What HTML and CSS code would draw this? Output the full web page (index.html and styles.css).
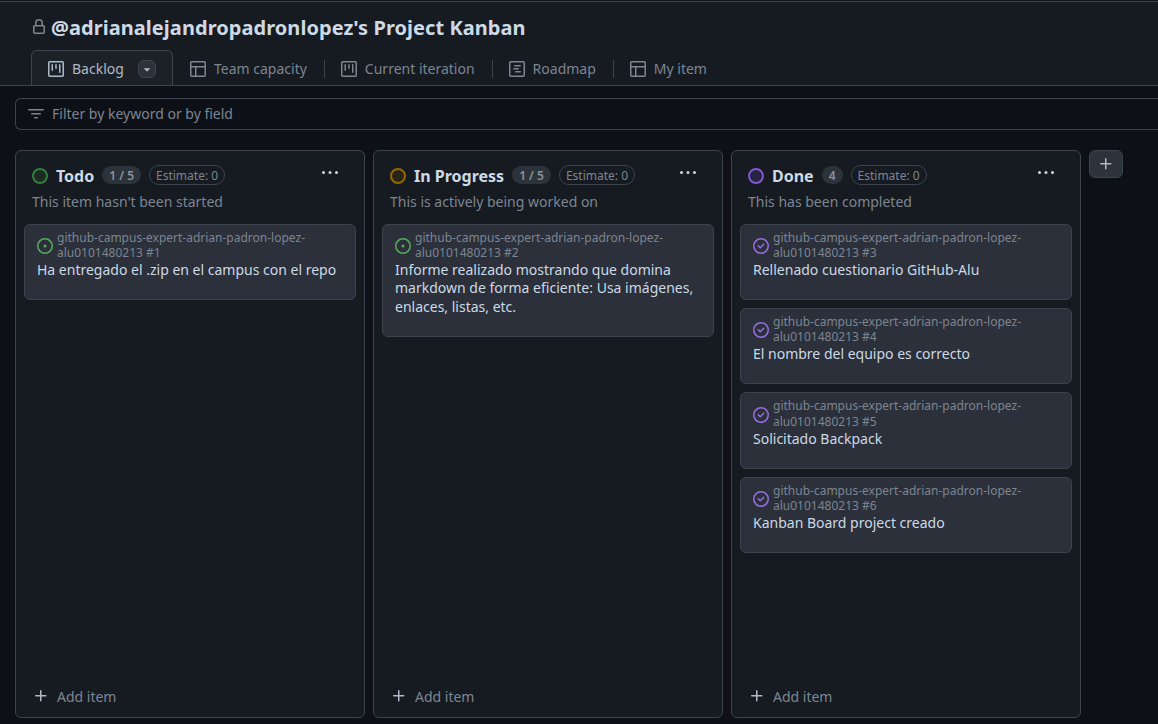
FILE: index.html
```html
<!DOCTYPE html>
<html lang="en">
<head>
    <meta charset="UTF-8">
    <meta name="viewport" content="width=device-width, initial-scale=1.0">
    <title>Project Kanban</title>
    <link rel="stylesheet" href="styles.css">
</head>
<body>
    <svg class="icon-defs" aria-hidden="true">
        <symbol id="i-lock" viewBox="0 0 16 16"><path d="M4 4a4 4 0 0 1 8 0v2h.25c.966 0 1.75.784 1.75 1.75v5.5A1.75 1.75 0 0 1 12.25 15h-8.5A1.75 1.75 0 0 1 2 13.25v-5.5C2 6.784 2.784 6 3.75 6H4Zm8.25 3.5h-8.5a.25.25 0 0 0-.25.25v5.5c0 .138.112.25.25.25h8.5a.25.25 0 0 0 .25-.25v-5.5a.25.25 0 0 0-.25-.25ZM10.5 6V4a2.5 2.5 0 1 0-5 0v2Z"/></symbol>
        <symbol id="i-board" viewBox="0 0 16 16"><path d="M0 1.75C0 .784.784 0 1.75 0h12.5C15.216 0 16 .784 16 1.75v12.5A1.75 1.75 0 0 1 14.25 16H1.75A1.75 1.75 0 0 1 0 14.25ZM1.5 1.75v12.5c0 .138.112.25.25.25h12.5a.25.25 0 0 0 .25-.25V1.75a.25.25 0 0 0-.25-.25H1.75a.25.25 0 0 0-.25.25ZM11.75 3a.75.75 0 0 1 .75.75v7.5a.75.75 0 0 1-1.5 0v-7.5a.75.75 0 0 1 .75-.75Zm-8.25.75a.75.75 0 0 1 1.5 0v5.5a.75.75 0 0 1-1.5 0ZM8 3a.75.75 0 0 1 .75.75v3.5a.75.75 0 0 1-1.5 0v-3.5A.75.75 0 0 1 8 3Z"/></symbol>
        <symbol id="i-table" viewBox="0 0 16 16"><path d="M0 1.75C0 .784.784 0 1.75 0h12.5C15.216 0 16 .784 16 1.75v12.5A1.75 1.75 0 0 1 14.25 16H1.75A1.75 1.75 0 0 1 0 14.25ZM6.5 6.5v8h7.75a.25.25 0 0 0 .25-.25V6.5Zm8-1.5V1.75a.25.25 0 0 0-.25-.25H1.75a.25.25 0 0 0-.25.25V5Zm-13 1.5v7.75c0 .138.112.25.25.25H5v-8Z"/></symbol>
        <symbol id="i-roadmap" viewBox="0 0 16 16"><path d="M4.75 7a.75.75 0 0 0 0 1.5h4.5a.75.75 0 0 0 0-1.5h-4.5ZM5 4.75A.75.75 0 0 1 5.75 4h5.5a.75.75 0 0 1 0 1.5h-5.5A.75.75 0 0 1 5 4.75ZM6.75 10a.75.75 0 0 0 0 1.5h4.5a.75.75 0 0 0 0-1.5h-4.5Z"/><path d="M0 1.75C0 .784.784 0 1.75 0h12.5C15.216 0 16 .784 16 1.75v12.5A1.75 1.75 0 0 1 14.25 16H1.75A1.75 1.75 0 0 1 0 14.25V1.75Zm1.75-.25a.25.25 0 0 0-.25.25v12.5c0 .138.112.25.25.25h12.5a.25.25 0 0 0 .25-.25V1.75a.25.25 0 0 0-.25-.25H1.75Z"/></symbol>
        <symbol id="i-filter" viewBox="0 0 16 16"><path d="M.75 3h14.5a.75.75 0 0 1 0 1.5H.75a.75.75 0 0 1 0-1.5ZM3 7.75A.75.75 0 0 1 3.75 7h8.5a.75.75 0 0 1 0 1.5h-8.5A.75.75 0 0 1 3 7.75Zm3 4a.75.75 0 0 1 .75-.75h2.5a.75.75 0 0 1 0 1.5h-2.5a.75.75 0 0 1-.75-.75Z"/></symbol>
        <symbol id="i-plus" viewBox="0 0 16 16"><path d="M7.75 2a.75.75 0 0 1 .75.75V7h4.25a.75.75 0 0 1 0 1.5H8.5v4.25a.75.75 0 0 1-1.5 0V8.5H2.75a.75.75 0 0 1 0-1.5H7V2.75A.75.75 0 0 1 7.75 2Z"/></symbol>
        <symbol id="i-kebab" viewBox="0 0 16 16"><path d="M8 9a1.5 1.5 0 1 0 0-3 1.5 1.5 0 0 0 0 3ZM1.5 9a1.5 1.5 0 1 0 0-3 1.5 1.5 0 0 0 0 3Zm13 0a1.5 1.5 0 1 0 0-3 1.5 1.5 0 0 0 0 3Z"/></symbol>
        <symbol id="i-open" viewBox="0 0 16 16"><path d="M8 9.5a1.5 1.5 0 1 0 0-3 1.5 1.5 0 0 0 0 3Z"/><path d="M8 0a8 8 0 1 1 0 16A8 8 0 0 1 8 0ZM1.5 8a6.5 6.5 0 1 0 13 0 6.5 6.5 0 0 0-13 0Z"/></symbol>
        <symbol id="i-closed" viewBox="0 0 16 16"><path d="M11.28 6.78a.75.75 0 0 0-1.06-1.06L7.25 8.69 5.78 7.22a.75.75 0 0 0-1.06 1.06l2 2a.75.75 0 0 0 1.06 0l3.5-3.5Z"/><path d="M16 8A8 8 0 1 1 0 8a8 8 0 0 1 16 0Zm-1.5 0a6.5 6.5 0 1 0-13 0 6.5 6.5 0 0 0 13 0Z"/></symbol>
    </svg>

    <header class="project-header">
        <h1 class="project-title">
            <svg class="icon lock-icon"><use href="#i-lock"/></svg>
            <span>@adrianalejandropadronlopez's Project Kanban</span>
        </h1>
        <nav class="tabs">
            <div class="tab tab-active">
                <svg class="icon"><use href="#i-board"/></svg>
                <span>Backlog</span>
                <span class="tab-caret"><svg viewBox="0 0 16 16"><path d="m4.427 7.427 3.396 3.396a.25.25 0 0 0 .354 0l3.396-3.396A.25.25 0 0 0 11.396 7H4.604a.25.25 0 0 0-.177.427Z"/></svg></span>
            </div>
            <div class="tab"><svg class="icon"><use href="#i-table"/></svg><span>Team capacity</span></div>
            <div class="tab tab-split"><svg class="icon"><use href="#i-board"/></svg><span>Current iteration</span></div>
            <div class="tab tab-split"><svg class="icon"><use href="#i-roadmap"/></svg><span>Roadmap</span></div>
            <div class="tab tab-split"><svg class="icon"><use href="#i-table"/></svg><span>My items</span></div>
        </nav>
    </header>

    <div class="filter-row">
        <div class="filter-bar">
            <svg class="icon"><use href="#i-filter"/></svg>
            <span>Filter by keyword or by field</span>
        </div>
    </div>

    <main class="board">
        <section class="column">
            <div class="column-head">
                <span class="status status-green"></span>
                <h2>Todo</h2>
                <span class="count">1 / 5</span>
                <span class="estimate">Estimate: 0</span>
                <svg class="icon kebab"><use href="#i-kebab"/></svg>
            </div>
            <p class="column-desc">This item hasn't been started</p>
            <div class="cards">
                <article class="card">
                    <div class="card-meta">
                        <svg class="icon state-open"><use href="#i-open"/></svg>
                        <span>github-campus-expert-adrian-padron-lopez-alu0101480213 #1</span>
                    </div>
                    <p class="card-title">Ha entregado el .zip en el campus con el repo</p>
                </article>
            </div>
            <div class="add-item"><svg class="icon"><use href="#i-plus"/></svg><span>Add item</span></div>
        </section>

        <section class="column">
            <div class="column-head">
                <span class="status status-yellow"></span>
                <h2>In Progress</h2>
                <span class="count">1 / 5</span>
                <span class="estimate">Estimate: 0</span>
                <svg class="icon kebab"><use href="#i-kebab"/></svg>
            </div>
            <p class="column-desc">This is actively being worked on</p>
            <div class="cards">
                <article class="card">
                    <div class="card-meta">
                        <svg class="icon state-open"><use href="#i-open"/></svg>
                        <span>github-campus-expert-adrian-padron-lopez-alu0101480213 #2</span>
                    </div>
                    <p class="card-title">Informe realizado mostrando que domina markdown de forma eficiente: Usa imágenes, enlaces, listas, etc.</p>
                </article>
            </div>
            <div class="add-item"><svg class="icon"><use href="#i-plus"/></svg><span>Add item</span></div>
        </section>

        <section class="column">
            <div class="column-head">
                <span class="status status-purple"></span>
                <h2>Done</h2>
                <span class="count">4</span>
                <span class="estimate">Estimate: 0</span>
                <svg class="icon kebab"><use href="#i-kebab"/></svg>
            </div>
            <p class="column-desc">This has been completed</p>
            <div class="cards">
                <article class="card">
                    <div class="card-meta">
                        <svg class="icon state-closed"><use href="#i-closed"/></svg>
                        <span>github-campus-expert-adrian-padron-lopez-alu0101480213 #3</span>
                    </div>
                    <p class="card-title">Rellenado cuestionario GitHub-Alu</p>
                </article>
                <article class="card">
                    <div class="card-meta">
                        <svg class="icon state-closed"><use href="#i-closed"/></svg>
                        <span>github-campus-expert-adrian-padron-lopez-alu0101480213 #4</span>
                    </div>
                    <p class="card-title">El nombre del equipo es correcto</p>
                </article>
                <article class="card">
                    <div class="card-meta">
                        <svg class="icon state-closed"><use href="#i-closed"/></svg>
                        <span>github-campus-expert-adrian-padron-lopez-alu0101480213 #5</span>
                    </div>
                    <p class="card-title">Solicitado Backpack</p>
                </article>
                <article class="card">
                    <div class="card-meta">
                        <svg class="icon state-closed"><use href="#i-closed"/></svg>
                        <span>github-campus-expert-adrian-padron-lopez-alu0101480213 #6</span>
                    </div>
                    <p class="card-title">Kanban Board project creado</p>
                </article>
            </div>
            <div class="add-item"><svg class="icon"><use href="#i-plus"/></svg><span>Add item</span></div>
        </section>

        <button class="add-column"><svg class="icon"><use href="#i-plus"/></svg></button>
    </main>
</body>
</html>
```

FILE: styles.css
```css
html, body {
    height: 724px;
    overflow: hidden;
}
body {
    margin: 0;
    background-color: #0d1117;
    color: #e6edf3;
    font-family: "Noto Sans", sans-serif;
    font-size: 14px;
    display: flex;
    flex-direction: column;
}
.icon-defs {
    width: 0;
    height: 0;
    position: absolute;
}
.icon {
    width: 16px;
    height: 16px;
    flex-shrink: 0;
    fill: currentColor;
}

/* header */
.project-header {
    height: 83px;
    margin-top: 1px;
    border-top: 1px solid #3d444d;
    border-bottom: 1px solid #3d444d;
    background-color: #161b22;
    padding-left: 31px;
    display: flex;
    flex-direction: column;
}
.project-title {
    margin: 0;
    height: 44px;
    padding-top: 4px;
    padding-bottom: 0;
    display: flex;
    align-items: flex-start;
    gap: 4px;
    font-size: 20px;
    font-weight: 700;
    letter-spacing: 0.05px;
    line-height: 44px;
    color: #cdd9e5;
}
.lock-icon {
    color: #7d8590;
    margin-top: 13px;
}
.tabs {
    display: flex;
    width: 675px;
    height: 35px;
    overflow: hidden;
    flex-shrink: 0;
}
.tab {
    display: flex;
    flex-shrink: 0;
    align-items: center;
    gap: 8px;
    height: 35px;
    padding: 2px 17px 0;
    color: #7d8590;
    white-space: nowrap;
    position: relative;
    box-sizing: border-box;
}
.tab-split::before {
    content: "";
    position: absolute;
    left: 0;
    top: 10px;
    width: 1px;
    height: 18px;
    background-color: #3d444d;
}
.tab-active {
    width: 142px;
    border: 1px solid #3d444d;
    border-bottom: none;
    border-radius: 6px 6px 0 0;
    background-color: #1c2128;
    color: #adbac7;
    padding: 1px 0 0 16px;
}
.tab-caret {
    width: 18px;
    height: 18px;
    margin-left: 6px;
    border: 1px solid #3d444d;
    border-radius: 6px;
    background-color: #2d333b;
    box-sizing: border-box;
    display: flex;
    align-items: center;
    justify-content: center;
}
.tab-caret svg {
    width: 14px;
    height: 14px;
    fill: #adbac7;
}

/* filter */
.filter-row {
    padding: 12px 0 20px 15px;
}
.filter-bar {
    height: 32px;
    border: 1px solid #3d444d;
    border-right: none;
    border-radius: 6px 0 0 6px;
    box-sizing: border-box;
    display: flex;
    align-items: center;
    gap: 8px;
    padding-left: 12px;
    padding-bottom: 1px;
    color: #7d8590;
}

/* board */
.board {
    display: flex;
    align-items: flex-start;
    gap: 8px;
    padding-left: 15px;
}
.column {
    width: 350px;
    height: 568px;
    border: 1px solid #3d444d;
    border-radius: 6px;
    background-color: #161b22;
    box-sizing: border-box;
    display: flex;
    flex-direction: column;
    padding: 0 8px;
}
.column-head {
    display: flex;
    align-items: center;
    height: 20px;
    margin-top: 14px;
    padding-left: 8px;
}
.column-head h2 {
    margin: 2px 8px 0 8px;
    font-size: 16px;
    font-weight: 700;
    color: #cdd9e5;
}
.status {
    width: 16px;
    height: 16px;
    margin-top: 1px;
    border: 2px solid;
    border-radius: 50%;
    box-sizing: border-box;
}
.status-green {
    border-color: #347d39;
    background-color: #1b2b22;
}
.status-yellow {
    border-color: #966600;
    background-color: #2a2416;
}
.status-purple {
    border-color: #8256d0;
    background-color: #272542;
}
.count {
    height: 18px;
    min-width: 18px;
    padding: 0 7px;
    border-radius: 10px;
    background-color: #2d333b;
    color: #8b949e;
    font-size: 12px;
    font-weight: 600;
    line-height: 20px;
    text-align: center;
    box-sizing: border-box;
}
.estimate {
    height: 20px;
    margin-left: 8px;
    padding: 1px 6px 0;
    border: 1px solid #3d444d;
    border-radius: 10px;
    color: #7d8590;
    font-size: 12px;
    line-height: 18px;
    box-sizing: border-box;
}
.kebab {
    margin-left: auto;
    margin-right: 18px;
    margin-top: -4px;
    color: #cdd9e5;
}
.column-desc {
    margin: 7px 0 0 8px;
    height: 20px;
    line-height: 20px;
    color: #7d8590;
}
.cards {
    margin-top: 11.6px;
    display: flex;
    flex-direction: column;
    gap: 8px;
}
.card {
    border: 1px solid #3d444d;
    border-radius: 6px;
    background-color: #2b303b;
    padding: 5px 12px 19.7px;
    box-sizing: border-box;
}
.card-meta {
    display: flex;
    align-items: center;
    gap: 4px;
    font-size: 12px;
    line-height: 15.5px;
    color: #7d8590;
}
.card-meta .icon {
    margin-top: 2px;
}
.state-open {
    color: #57ab5a;
}
.state-closed {
    color: #986ee2;
}
.card-title {
    margin: 0.2px 0 0;
    line-height: 18.5px;
    color: #cdd9e5;
}
.add-item {
    margin-top: auto;
    margin-bottom: 11px;
    padding-left: 9px;
    display: flex;
    align-items: center;
    gap: 8px;
    color: #7d8590;
    height: 20px;
}
.add-item .icon {
    color: #adbac7;
}
.add-column {
    width: 34px;
    height: 28px;
    padding: 0;
    border: 1px solid #3d444d;
    border-radius: 6px;
    background-color: #2d333b;
    color: #adbac7;
    display: flex;
    align-items: center;
    justify-content: center;
}
```
